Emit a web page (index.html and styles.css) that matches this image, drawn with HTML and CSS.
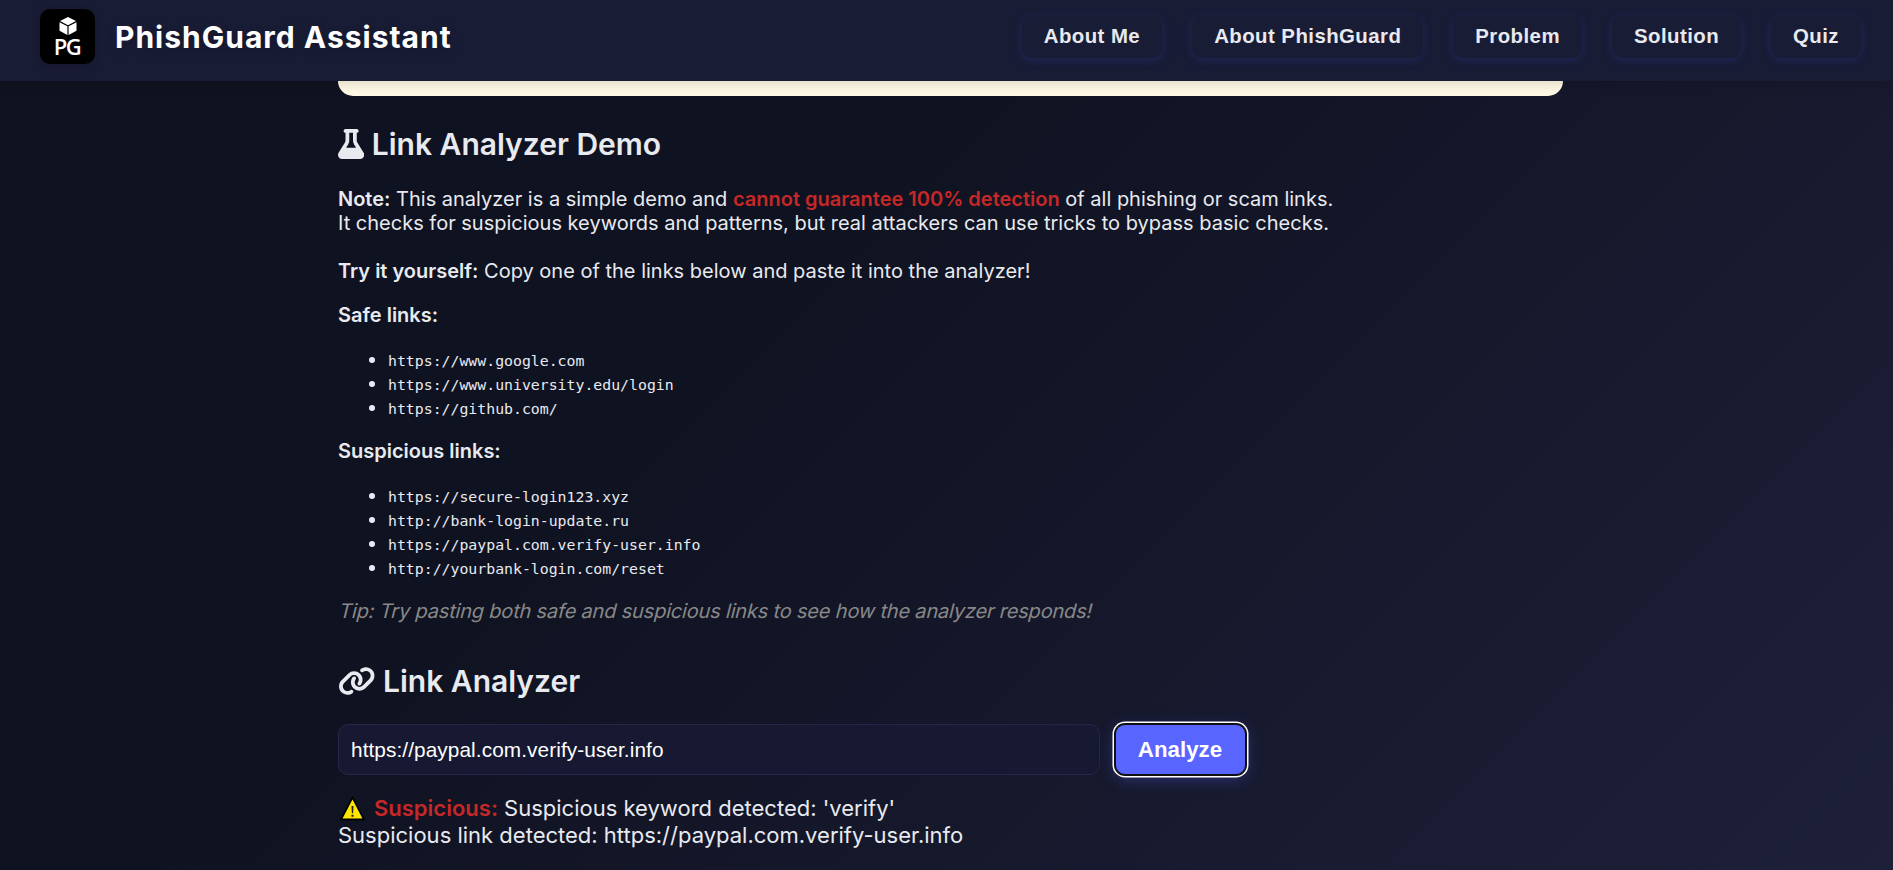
FILE: index.html
```html
<!DOCTYPE html>
<html lang="en">
<head>
<meta charset="utf-8">
<title>PhishGuard Assistant</title>
<link rel="stylesheet" href="styles.css">
</head>
<body>
<header class="topbar">
  <div class="brand">
    <div class="logo">
      <svg class="logo-cube" viewBox="0 0 18 18"><path d="M9 0L17 4L9 8.2L1 4ZM.5 5.2L8.4 9.3V18L.5 13.7ZM17.5 5.2L9.6 9.3V18L17.5 13.7Z"/></svg>
      <span class="logo-text">PG</span>
    </div>
    <span class="brand-name">PhishGuard Assistant</span>
  </div>
  <nav class="nav">
    <button class="nav-btn">About Me</button>
    <button class="nav-btn">About PhishGuard</button>
    <button class="nav-btn">Problem</button>
    <button class="nav-btn">Solution</button>
    <button class="nav-btn">Quiz</button>
  </nav>
</header>
<main class="content">
  <div class="card"></div>
  <section class="demo">
    <h2><svg class="icon icon-flask" viewBox="0 0 448 512"><path d="M288 0H160 128C110.3 0 96 14.3 96 32s14.3 32 32 32V196.8c0 11.8-3.3 23.5-9.5 33.5L10.3 406.2C3.6 417.2 0 429.7 0 442.6C0 480.9 31.1 512 69.4 512H378.6c38.3 0 69.4-31.1 69.4-69.4c0-12.8-3.6-25.4-10.3-36.4L329.5 230.4c-6.2-10.1-9.5-21.7-9.5-33.5V64c17.7 0 32-14.3 32-32s-14.3-32-32-32H288zM192 196.8V64h64V196.8c0 23.7 6.6 46.9 19 67.1L309.5 320h-171L173 263.9c12.4-20.2 19-43.4 19-67.1z"/></svg> Link Analyzer Demo</h2>
    <p><strong>Note:</strong> This analyzer is a simple demo and <strong class="danger">cannot guarantee 100% detection</strong> of all phishing or scam links.<br>It checks for suspicious keywords and patterns, but real attackers can use tricks to bypass basic checks.<br><br><strong>Try it yourself:</strong> Copy one of the links below and paste it into the analyzer!</p>
    <p><strong>Safe links:</strong></p>
    <ul>
      <li><code>https://www.google.com</code></li>
      <li><code>https://www.university.edu/login</code></li>
      <li><code>https://github.com/</code></li>
    </ul>
    <p><strong>Suspicious links:</strong></p>
    <ul>
      <li><code>https://secure-login123.xyz</code></li>
      <li><code>http://bank-login-update.ru</code></li>
      <li><code>https://paypal.com.verify-user.info</code></li>
      <li><code>http://yourbank-login.com/reset</code></li>
    </ul>
    <p class="tip">Tip: Try pasting both safe and suspicious links to see how the analyzer responds!</p>
  </section>
  <section class="analyzer">
    <h2><svg class="icon icon-link" viewBox="0 0 640 512"><path d="M579.8 267.7c56.5-56.5 56.5-148 0-204.5c-50-50-128.8-56.5-186.3-15.4l-1.6 1.1c-14.4 10.3-17.7 30.3-7.4 44.6s30.3 17.7 44.6 7.4l1.6-1.1c32.1-22.9 76-19.3 103.8 8.6c31.5 31.5 31.5 82.5 0 114L422.3 334.8c-31.5 31.5-82.5 31.5-114 0c-27.9-27.9-31.5-71.8-8.6-103.8l1.1-1.6c10.3-14.4 6.9-34.4-7.4-44.6s-34.4-6.9-44.6 7.4l-1.1 1.6C206.5 251.2 213 330 263 380c56.5 56.5 148 56.5 204.5 0L579.8 267.7zM60.2 244.3c-56.5 56.5-56.5 148 0 204.5c50 50 128.8 56.5 186.3 15.4l1.6-1.1c14.4-10.3 17.7-30.3 7.4-44.6s-30.3-17.7-44.6-7.4l-1.6 1.1c-32.1 22.9-76 19.3-103.8-8.6C74 372 74 321 105.5 289.5L217.7 177.2c31.5-31.5 82.5-31.5 114 0c27.9 27.9 31.5 71.8 8.6 103.9l-1.1 1.6c-10.3 14.4-6.9 34.4 7.4 44.6s34.4 6.9 44.6-7.4l1.1-1.6C433.5 260.8 427 182 377 132c-56.5-56.5-148-56.5-204.5 0L60.2 244.3z"/></svg> Link Analyzer</h2>
    <div class="form">
      <input class="url" type="text" value="https://paypal.com.verify-user.info">
      <button class="analyze">Analyze</button>
    </div>
    <div class="result"><svg class="warn" viewBox="0 0 24 24"><path class="warn-tri" d="M12 1.6L22.9 22.4H1.1Z"/><path class="warn-mark" d="M11 9.5h2l-.4 7h-1.2zM11 18h2v2h-2z"/></svg><strong class="danger">Suspicious:</strong> Suspicious keyword detected: 'verify'<br>Suspicious link detected: https://paypal.com.verify-user.info</div>
  </section>
</main>
</body>
</html>
```
FILE: styles.css
```css
* { box-sizing: border-box; }
html { height: 100%; overflow: hidden; }
body {
  margin: 0;
  height: 100%;
  overflow: hidden;
  font-family: Inter, "Liberation Sans", sans-serif;
  font-size: 20px;
  line-height: 24px;
  color: #e8eaf0;
  background: linear-gradient(135deg, #0f1220 0%, #0f1220 36%, #1e203a 100%);
}
.topbar {
  position: relative;
  z-index: 1;
  height: 81px;
  padding: 0 32px 8px 40px;
  display: flex;
  align-items: center;
  justify-content: space-between;
  background: #191c35;
  box-shadow: 0 2px 12px rgba(0, 0, 0, .15);
}
.brand { display: flex; align-items: center; gap: 20px; }
.logo {
  width: 55px;
  height: 55px;
  border-radius: 10px;
  background: #000;
  color: #fff;
  display: flex;
  flex-direction: column;
  align-items: center;
  padding-top: 8px;
  box-shadow: 0 2px 8px rgba(0, 0, 0, .2);
}
.logo-cube { width: 18px; height: 18px; fill: #fff; }
.logo-text { margin-left: -1px; font: 600 22px/22px "Open Sans", sans-serif; letter-spacing: -1.4px; }
.brand-name {
  font-size: 30px;
  line-height: 36px;
  font-weight: 700;
  letter-spacing: 1px;
  color: #fff;
  text-shadow: 0 2px 8px rgba(0, 0, 0, .2);
}
.nav { display: flex; gap: 30px; }
.nav-btn {
  height: 43px;
  padding: 0 22px 1px;
  border: 0;
  border-radius: 10px;
  background: #191c35;
  color: #e8eaf0;
  font: 700 20.4px/23px "Liberation Sans", sans-serif;
  letter-spacing: .44px;
  box-shadow: 0 2px 8px rgba(60, 70, 200, .25);
}
.content { width: 1225px; margin-left: 338px; }
.card {
  height: 15px;
  border-radius: 0 0 15px 15px;
  background: #fff8e5;
  margin-bottom: 30px;
}
h2 {
  margin: 0 0 25px;
  font-size: 30px;
  line-height: 36px;
  font-weight: 600;
}
.icon { fill: currentColor; vertical-align: -4px; height: 30px; }
.icon-flask { width: 26.25px; }
.icon-link { width: 37.5px; }
p { margin: 0 0 20px; }
strong { font-weight: 600; }
.danger { color: #c62828; }
ul { margin: 0 0 20px; padding-left: 50px; }
li { height: 24px; }
code { font: 14.84px/24px "DejaVu Sans Mono", monospace; }
.tip {
  margin-bottom: 40px;
  color: #888;
  letter-spacing: -.185px;
  transform: skewX(-14deg);
  transform-origin: 0 19px;
}
.form { display: flex; gap: 15px; margin-bottom: 20px; }
.url {
  width: 762px;
  height: 51px;
  padding: 0 12px;
  border: 1px solid #25264a;
  border-radius: 10px;
  background: #161931;
  color: #fff;
  font: 20.8px "Liberation Sans", sans-serif;
  letter-spacing: .08px;
}
.analyze {
  width: 131px;
  height: 51px;
  padding: 0 1px 0 0;
  border: 1px solid #101010;
  border-radius: 10px;
  background: #5865ff;
  color: #fff;
  font: 700 22.3px "Liberation Sans", sans-serif;
  box-shadow: 0 0 0 1px #101010, 0 0 0 2.5px #fff, 0 4px 16px rgba(88, 101, 255, .35);
}
.result { font-size: 22px; line-height: 27px; }
.warn { width: 25px; height: 25px; margin: 0 9px 0 2px; vertical-align: -5px; }
.warn-tri { fill: #ffe600; stroke: #000; stroke-width: 1.6; }
.warn-mark { fill: #222; }
```
